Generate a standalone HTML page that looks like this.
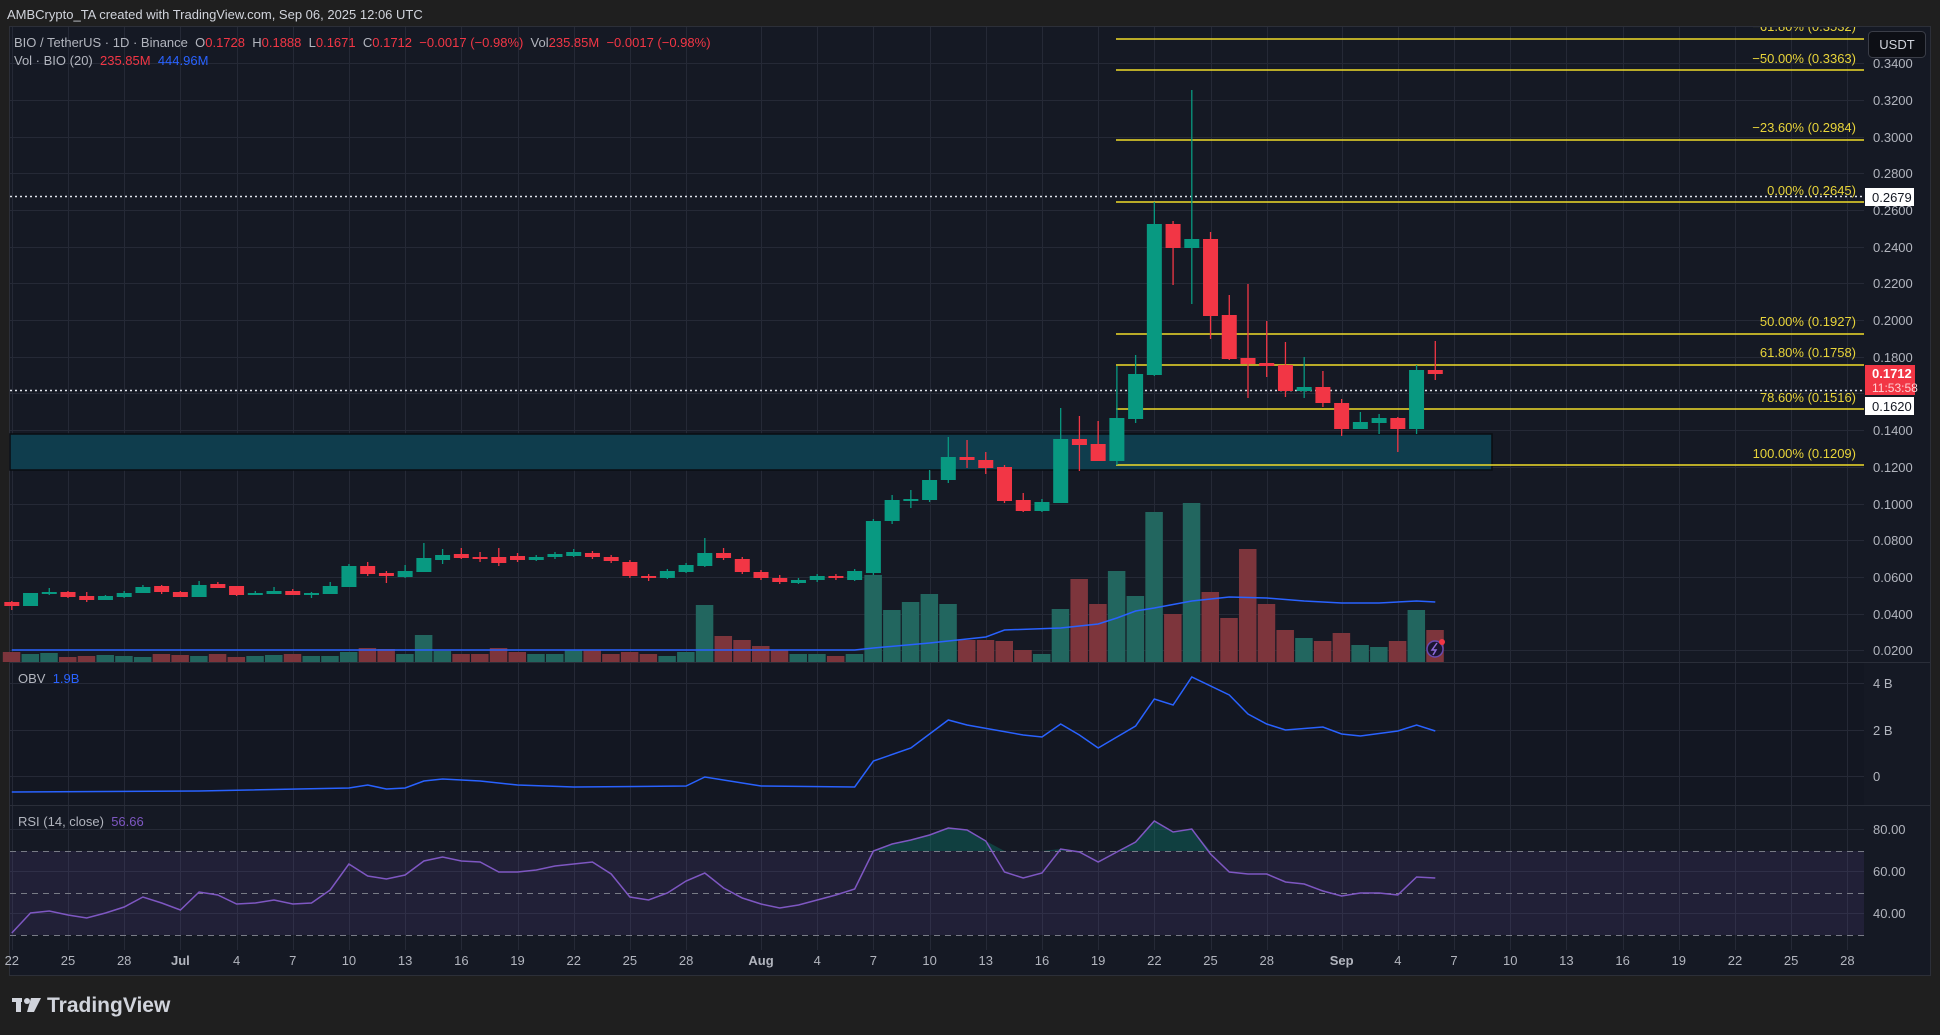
<!DOCTYPE html>
<html><head><meta charset="utf-8">
<style>
html,body{margin:0;padding:0;background:#1f1f1f;}
body{width:1940px;height:1035px;overflow:hidden;position:relative;font-family:"Liberation Sans",sans-serif;}
.t{position:absolute;white-space:nowrap;}
</style></head>
<body>
<svg id="s" width="1940" height="1035" style="position:absolute;left:0;top:0" xmlns="http://www.w3.org/2000/svg" font-family="Liberation Sans, sans-serif">
<defs><clipPath id="cp"><rect x="10" y="27" width="1920" height="948"/></clipPath></defs>
<rect x="0" y="0" width="1940" height="1035" fill="#1f1f1f"/>
<rect x="9.5" y="26.5" width="1921" height="949" fill="#151924" stroke="#2c2f38"/>
<rect x="10" y="662" width="1854" height="143" fill="#131722"/>
<rect x="10" y="805" width="1854" height="145" fill="#151924"/>
<g id="grid" stroke="#252936" stroke-width="1"></g>
<rect x="10" y="851" width="1854" height="84" fill="#7e57c2" fill-opacity="0.12"/>
<g stroke="#787b86" stroke-width="1" stroke-dasharray="6 5">
<line x1="10" y1="851.5" x2="1864" y2="851.5"/><line x1="10" y1="893.5" x2="1864" y2="893.5"/><line x1="10" y1="935.5" x2="1864" y2="935.5"/>
</g>
<line x1="10" y1="662.5" x2="1930" y2="662.5" stroke="#2a2e39"/>
<line x1="10" y1="805.5" x2="1930" y2="805.5" stroke="#2a2e39"/>
<rect x="10" y="434" width="1482" height="36" fill="#0f3d4d" stroke="#0a0d12" stroke-width="1.5"/>
<g id="vol"></g>
<g id="fib" stroke="#f0dc2a" stroke-width="1.5"></g>
<line x1="10" y1="196.5" x2="1864" y2="196.5" stroke="#e0e3eb" stroke-width="1.5" stroke-dasharray="2 3"/>
<line x1="10" y1="390.5" x2="1864" y2="390.5" stroke="#e0e3eb" stroke-width="1.5" stroke-dasharray="2 3"/>
<g id="cnd"></g>
<g id="ind"></g>
<g font-size="13" fill="#e8d43a" text-anchor="end" clip-path="url(#cp)">
<text x="1856" y="31">−61.80% (0.3532)</text>
<text x="1856" y="63">−50.00% (0.3363)</text>
<text x="1856" y="132">−23.60% (0.2984)</text>
<text x="1856" y="195">0.00% (0.2645)</text>
<text x="1856" y="326">50.00% (0.1927)</text>
<text x="1856" y="357">61.80% (0.1758)</text>
<text x="1856" y="402">78.60% (0.1516)</text>
<text x="1856" y="458">100.00% (0.1209)</text>
</g>
<rect x="1864" y="27" width="66" height="21" fill="#151924"/>
<g font-size="13" fill="#b2b5be">
<text x="1873" y="68">0.3400</text><text x="1873" y="105">0.3200</text><text x="1873" y="142">0.3000</text>
<text x="1873" y="178">0.2800</text><text x="1873" y="215">0.2600</text><text x="1873" y="252">0.2400</text>
<text x="1873" y="288">0.2200</text><text x="1873" y="325">0.2000</text><text x="1873" y="362">0.1800</text>
<text x="1873" y="435">0.1400</text><text x="1873" y="472">0.1200</text>
<text x="1873" y="509">0.1000</text><text x="1873" y="545">0.0800</text><text x="1873" y="582">0.0600</text>
<text x="1873" y="619">0.0400</text><text x="1873" y="655">0.0200</text>
<text x="1873" y="688">4 B</text><text x="1873" y="735">2 B</text><text x="1873" y="781">0</text>
<text x="1873" y="834">80.00</text><text x="1873" y="876">60.00</text><text x="1873" y="918">40.00</text>
</g>
<rect x="1868.5" y="31.5" width="57" height="26" rx="4" fill="#0d0f15" stroke="#3a3d47"/>
<text x="1897" y="49" font-size="13" fill="#d1d4dc" text-anchor="middle">USDT</text>
<rect x="1865" y="188" width="49" height="18" fill="#ffffff"/>
<text x="1872" y="202" font-size="13" fill="#131722">0.2679</text>
<rect x="1865" y="365" width="50" height="30" fill="#f23645"/>
<text x="1872" y="378" font-size="13" fill="#ffffff" font-weight="bold">0.1712</text>
<text x="1872" y="392" font-size="12" fill="#ffd0d4">11:53:58</text>
<rect x="1865" y="397" width="49" height="18" fill="#ffffff"/>
<text x="1872" y="411" font-size="13" fill="#131722">0.1620</text>
<g id="tl" font-size="13" fill="#b2b5be" text-anchor="middle"></g>
<circle cx="1435" cy="649" r="8" fill="#1b1530" stroke="#6a4bb0" stroke-width="1.5"/>
<path d="M1437 643 L1432 650 L1436 650 L1433 655" stroke="#8e6bd8" stroke-width="1.5" fill="none"/>
<circle cx="1442" cy="642" r="3" fill="#f23645"/>
<g fill="#d1d4dc">
<rect x="12" y="998" width="10" height="4"/><rect x="16" y="998" width="5" height="14"/>
<circle cx="27" cy="1001" r="3"/><path d="M31 998 L41 998 L34 1012 L27 1012 Z"/>
</g>
<text x="47" y="1012" font-size="21" font-weight="bold" fill="#d1d4dc">TradingView</text>
</svg>
<div class="t" style="left:7px;top:7px;font-size:13px;color:#d1d4dc">AMBCrypto_TA created with TradingView.com, Sep 06, 2025 12:06 UTC</div>
<div class="t" style="left:14px;top:35px;font-size:13px;color:#b2b5be">BIO / TetherUS · 1D · Binance &nbsp;O<span style="color:#f23645">0.1728</span> &nbsp;H<span style="color:#f23645">0.1888</span> &nbsp;L<span style="color:#f23645">0.1671</span> &nbsp;C<span style="color:#f23645">0.1712</span> &nbsp;<span style="color:#f23645">−0.0017 (−0.98%)</span> &nbsp;Vol<span style="color:#f23645">235.85M</span> &nbsp;<span style="color:#f23645">−0.0017 (−0.98%)</span></div>
<div class="t" style="left:14px;top:53px;font-size:13px;color:#b2b5be">Vol · BIO (20) &nbsp;<span style="color:#f23645">235.85M</span> &nbsp;<span style="color:#2962ff">444.96M</span></div>
<div class="t" style="left:18px;top:671px;font-size:13px;color:#b2b5be">OBV &nbsp;<span style="color:#2962ff">1.9B</span></div>
<div class="t" style="left:18px;top:814px;font-size:13px;color:#b2b5be">RSI (14, close) &nbsp;<span style="color:#7e57c2">56.66</span></div>
<script>
var NS="http://www.w3.org/2000/svg";
function el(p,t,a){var e=document.createElementNS(NS,t);for(var k in a)e.setAttribute(k,a[k]);document.getElementById(p).appendChild(e);return e;}
function X(k){return 68+18.73*(k-3);}
var tls=[];
for(var i=-3;i<=95;i++){
  var lab=null;
  if(i==-3)lab="22";
  else if(i<6){if(i%3==0)lab=String(25+i);}
  else if(i<37){var d=i-5;if(d==1)lab="Jul";else if((i)%3==0&&d<30)lab=String(d);}
  else if(i<68){var d=i-36;if(d==1)lab="Aug";else if(i%3==1&&d>=4&&d<30)lab=String(d);}
  else{var d=i-67;if(d==1)lab="Sep";else if(i%3==2&&d>=4)lab=String(d);}
  if(lab){var x=68+18.73*i;tls.push([x,lab]);}
}
tls.forEach(function(t){
  var x=Math.round(t[0])+0.5;
  el("grid","line",{x1:x,y1:27,x2:x,y2:950});
  var tx=el("tl","text",{x:t[0],y:965});tx.textContent=t[1];
  if(t[1]=="Jul"||t[1]=="Aug"||t[1]=="Sep")tx.setAttribute("font-weight","bold");
});
[63,100,137,173,210,247,283,320,357,393,430,467,504,540,577,614,650,683,730,776,829,871,913].forEach(function(y){
  el("grid","line",{x1:10,y1:y+0.5,x2:1864,y2:y+0.5});
});
[39,70,140,202,334,365,409,465].forEach(function(y){el("fib","line",{x1:1116,y1:y,x2:1864,y2:y});});
var C=[[602,606,601,610],[606,593,593,606],[594,592,588,595],[592,597,591,598],[596,600,592,602],[600,596,595,600],[597,593,591,598],[593,587,585,593],[586,592,585,594],[592,597,591,597],
[597,585,581,597],[584,588,582,588],[586,595,586,596],[595,593,591,595],[594,591,587,594],[591,595,589,595],[594,593,592,598],[594,586,582,594],[587,566,564,587],[566,574,562,576],
[573,576,571,583],[577,571,565,578],[572,558,543,572],[560,555,549,564],[554,558,548,559],[557,558,552,562],[557,563,548,566],[556,560,553,562],[560,557,555,561],[557,554,552,559],
[556,552,549,557],[553,557,551,559],[557,561,555,563],[562,576,560,578],[576,578,574,581],[578,571,569,579],[572,565,563,573],[566,553,538,567],[553,558,548,560],[559,572,557,574],
[572,578,570,580],[578,582,575,584],[583,580,578,584],[580,576,574,582],[576,578,574,580],[580,571,569,581],[573,521,519,575],[521,500,495,524],[500,499,490,508],[500,480,470,502],
[480,457,437,483],[457,460,440,468],[460,468,452,474],[467,501,465,503],[500,511,493,512],[511,502,499,512],[503,439,408,503],[439,445,416,471],[444,461,421,461],[461,418,366,465],
[419,374,355,423],[375,224,202,376],[224,248,221,285],[248,239,90,304],[239,316,232,339],[315,359,295,360],[358,364,284,398],[363,366,321,377],[365,391,342,397],[391,387,357,398],
[387,403,371,407],[403,429,399,436],[429,422,412,429],[423,418,414,434],[418,429,417,452],[429,370,365,434],[370,374,341,380]];
var V=[10,8,9,5,6,7,6,5,8,7,6,8,5,6,7,8,6,6,10,14,13,8,27,11,8,8,14,10,8,8,12,12,8,10,8,6,10,57,26,22,16,12,8,8,6,8,87,52,60,68,58,22,22,21,12,8,53,83,58,91,66,150,48,159,70,44,113,58,32,24,21,29,17,15,21,52,32];
C.forEach(function(c,k){
  var x=X(k),up=c[1]<c[0],col=up?"#089981":"#f23645";
  var vh=V[k];
  el("vol","rect",{x:x-9,y:662-vh,width:17.5,height:vh,fill:up?"#22665f":"#7d353c"});
  el("cnd","line",{x1:x,y1:c[2],x2:x,y2:c[3],stroke:col,"stroke-width":1.3});
  var t=Math.min(c[0],c[1]),h=Math.max(2,Math.abs(c[1]-c[0]));
  el("cnd","rect",{x:x-7.5,y:t,width:15,height:h,fill:col});
});
var MA=[[0,650],[45,650],[46,648],[49,643],[52,637],[53,630],[56,628],[58,624],[59,618],[60,611],[61,608],[63,601],[65,597],[67,598],[69,601],[71,603],[73,603],[75,601],[76,602]];
var OBV=[[0,792],[10,791],[18,788],[19,785],[20,789],[21,788],[22,781],[23,779],[25,781],[27,785],[30,787],[36,786],[37,777],[40,786],[45,787],[46,761],[48,748],[50,720],[51,725],[54,735],[55,737],[56,724],[57,735],[58,748],[59,737],[60,726],[61,699],[62,705],[63,677],[65,695],[66,714],[67,724],[68,730],[70,727],[71,734],[72,736],[74,731],[75,725],[76,731]];
function pts(a){return a.map(function(p){return X(p[0]).toFixed(1)+","+p[1];}).join(" ");}
el("vol","polyline",{points:pts(MA),fill:"none",stroke:"#2962ff","stroke-width":1.5});
el("ind","polyline",{points:pts(OBV),fill:"none",stroke:"#2962ff","stroke-width":1.5});
var R=[933,913,911,915,918,913,907,897,903,910,892,895,904,903,900,904,903,890,864,876,879,875,861,857,861,862,872,872,870,866,864,862,874,897,900,893,881,873,888,898,904,908,905,900,895,889,851,844,840,835,828,830,841,872,878,873,849,852,862,852,842,821,832,829,854,872,874,874,882,884,891,896,893,893,895,877,878];
var rp=R.map(function(y,k){return [k,y];});
var d="M"+X(0)+",851 "+rp.map(function(p){return "L"+X(p[0]).toFixed(1)+","+Math.min(p[1],851);}).join(" ")+" L"+X(76)+",851 Z";
el("ind","path",{d:d,fill:"#089981","fill-opacity":0.3});
el("ind","polyline",{points:pts(rp),fill:"none",stroke:"#7e57c2","stroke-width":1.5});
</script>
</body></html>
